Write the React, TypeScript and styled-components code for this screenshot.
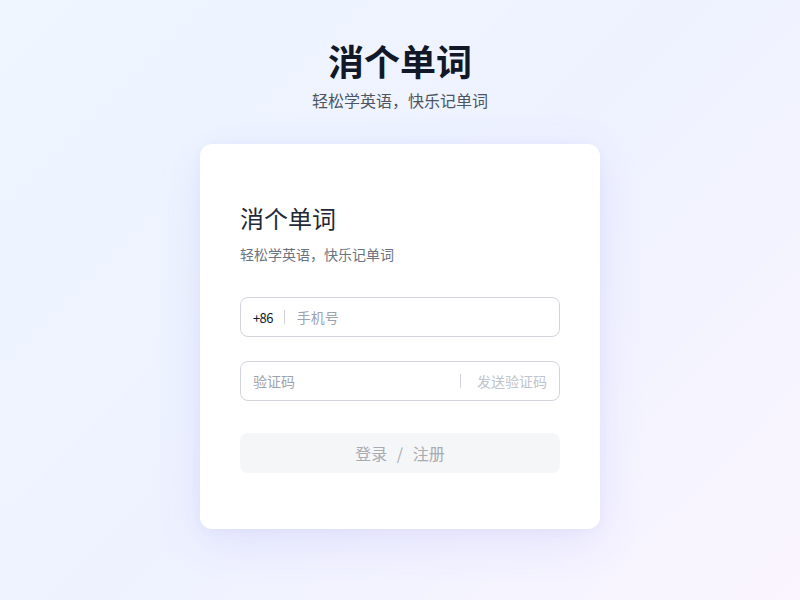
import React from 'react';
import styled, { createGlobalStyle } from 'styled-components';

const FONT = `"Noto Sans CJK SC", "Noto Sans", "Liberation Sans", sans-serif`;

const GlobalStyle = createGlobalStyle`
  html, body {
    margin: 0;
    padding: 0;
  }
  body {
    font-family: ${FONT};
  }
  * {
    box-sizing: border-box;
  }
`;

const App = () => {
  return (
    <Page>
      <GlobalStyle />
      <Header>
        <Brand>消个单词</Brand>
        <Slogan>轻松学英语，快乐记单词</Slogan>
      </Header>

      <Card>
        <CardTitle>消个单词</CardTitle>
        <CardSubtitle>轻松学英语，快乐记单词</CardSubtitle>

        <Form>
          <Field>
            <Prefix>+86</Prefix>
            <Divider />
            <Input placeholder="手机号" />
          </Field>

          <Field>
            <Input placeholder="验证码" />
            <Divider />
            <SendCode type="button" disabled>
              发送验证码
            </SendCode>
          </Field>

          <Submit type="button" disabled>
            登录 <Slash>/</Slash> 注册
          </Submit>
        </Form>
      </Card>
    </Page>
  );
};

// 背景
const Page = styled.div`
  min-height: 600px;
  display: flex;
  flex-direction: column;
  align-items: center;
  padding-top: 38px;
  background: linear-gradient(135deg, #eff6ff 0%, #eef2ff 50%, #faf5ff 100%);
  font-family: ${FONT};
`;

// 顶部标题
const Header = styled.div`
  display: flex;
  flex-direction: column;
  align-items: center;
  margin-bottom: 32px;
`;

const Brand = styled.h1`
  margin: 0;
  font-size: 36px;
  line-height: 44px;
  font-weight: 700;
  color: #111827;
`;

const Slogan = styled.p`
  margin: 6px 0 0;
  font-size: 16px;
  line-height: 24px;
  color: #4b5563;
`;

// 登录卡片
const Card = styled.div`
  width: 400px;
  background: #ffffff;
  border-radius: 12px;
  padding: 56px 40px 56px;
  box-shadow: 0 12px 48px rgba(79, 70, 229, 0.1), 0 2px 12px rgba(79, 70, 229, 0.04);
`;

const CardTitle = styled.h2`
  margin: 0;
  font-size: 24px;
  line-height: 36px;
  font-weight: 400;
  color: #1f2937;
`;

const CardSubtitle = styled.p`
  margin: 8px 0 0;
  font-size: 14px;
  line-height: 20px;
  color: #6b7280;
`;

const Form = styled.div`
  display: flex;
  flex-direction: column;
  gap: 24px;
  margin-top: 33px;
`;

const Field = styled.div`
  display: flex;
  align-items: center;
  height: 40px;
  padding: 0 12px;
  border: 1px solid #d1d5db;
  border-radius: 8px;
  background: #ffffff;
`;

const Prefix = styled.span`
  font-size: 13px;
  letter-spacing: -0.6px;
  color: #111827;
`;

const Divider = styled.span`
  width: 1px;
  height: 14px;
  background: #d1d5db;
  margin: 0 12px 0 11px;
`;

const Input = styled.input`
  flex: 1;
  min-width: 0;
  border: none;
  outline: none;
  padding: 0;
  font-family: ${FONT};
  font-size: 14px;
  color: #111827;
  background: transparent;

  &::placeholder {
    color: #9ca3af;
  }
`;

const SendCode = styled.button`
  border: none;
  background: none;
  padding: 0 0 0 4px;
  font-family: ${FONT};
  font-size: 14px;
  color: #c0c4cc;
  cursor: not-allowed;
`;

const Submit = styled.button`
  margin-top: 8px;
  height: 40px;
  border: none;
  border-radius: 8px;
  background: #f5f6f8;
  font-family: ${FONT};
  font-size: 16px;
  color: #a8abb2;
  cursor: not-allowed;
`;

const Slash = styled.span`
  margin: 0 6px;
`;

export default App;
